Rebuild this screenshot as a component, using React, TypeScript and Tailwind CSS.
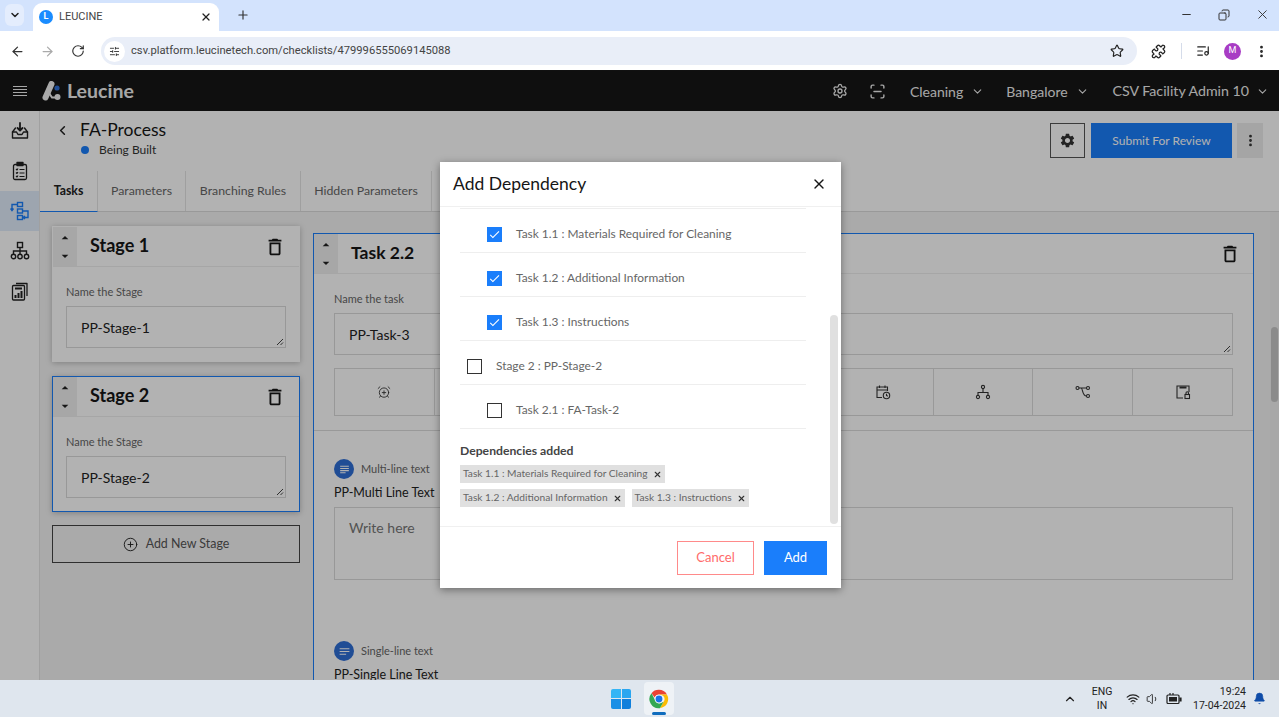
import React from 'react';
import {
  AlarmClockPlus, ArrowLeft, ArrowRight, ChevronDown, ChevronLeft, ChevronUp,
  Copy, EllipsisVertical, Minus, Plus, PlusCircle, Puzzle, RotateCw, ScanLine,
  Settings, SlidersHorizontal, Star, Volume1, Wifi, X, ListMusic, Bell,
} from 'lucide-react';
import { MdDeleteOutline, MdSettings, MdArrowDropUp, MdArrowDropDown, MdCheck, MdSubject, MdNotes } from 'react-icons/md';

const Mover = () => (
  <div className="w-[24px] bg-[#f0f0f0] flex flex-col items-center justify-center h-full text-[#222]">
    <MdArrowDropUp size={16} />
    <MdArrowDropDown size={16} className="mt-[2px]" />
  </div>
);

const Grip = () => (
  <svg width="8" height="8" viewBox="0 0 8 8" className="block">
    <path d="M1 7 L7 1 M4.5 7 L7 4.5" stroke="currentColor" strokeWidth="1" />
  </svg>
);

const StageCard = ({ title, value, active }: { title: string; value: string; active?: boolean }) => (
  <div className={`w-[248px] bg-white shadow-[0_1px_6px_rgba(0,0,0,0.25)] border ${active ? 'border-[#1a7efb]' : 'border-transparent'}`}>
    <div className="h-[40px] flex items-center border-b border-[#eeeeee]">
      <Mover />
      <div className="ml-[13px] -mt-[2px] text-[18px] font-bold text-[#161616]">{title}</div>
      <MdDeleteOutline size={22} className="ml-auto mr-[13px] text-[#161616]" />
    </div>
    <div className="px-[13px] pt-[18px] pb-[13px]">
      <div className="text-[11px] text-[#666] leading-[14px]">Name the Stage</div>
      <div className="relative mt-[7px] h-[42px] border border-[#dadada] pl-[14px] flex items-center text-[14px] text-[#222]">
        {value}
        <span className="absolute right-[1px] bottom-[1px] text-[#444]"><Grip /></span>
      </div>
    </div>
  </div>
);

const DepRow = ({ label, checked, nested }: { label: string; checked?: boolean; nested?: boolean }) => (
  <div className={`h-[44px] border-b border-[#eeeeee] flex items-center pt-[7px] ${nested ? 'pl-[27px]' : 'pl-[7px]'}`}>
    {checked ? (
      <span className="w-[15px] h-[15px] bg-[#1a7efb] flex items-center justify-center text-white"><MdCheck size={13} /></span>
    ) : (
      <span className="w-[15px] h-[15px] border-[1.5px] border-[#333]" />
    )}
    <span className="ml-[14px] text-[11.9px] text-[#666]">{label}</span>
  </div>
);

const Chip = ({ label }: { label: string }) => (
  <span className="h-[18px] bg-[#e0e0e0] px-[3px] flex items-center text-[10.2px] text-[#666]">
    {label}
    <X size={9} strokeWidth={3} className="ml-[5px] text-[#333]" />
  </span>
);

const LeucineLogo = () => (
  <svg width="19" height="20" viewBox="0 0 19 20" className="block">
    <path d="M9.5 3 L3.5 16.5" stroke="#f2f2f2" strokeWidth="6" strokeLinecap="round" />
    <path d="M7 12 L10 16.5 L14 16.5" stroke="#f2f2f2" strokeWidth="2" fill="none" strokeLinecap="round" />
    <circle cx="15" cy="7" r="2.6" fill="#2f6fd6" />
    <circle cx="15.5" cy="16" r="3" fill="#f2f2f2" />
  </svg>
);

const ChromeLogo = () => (
  <svg width="22" height="22" viewBox="0 0 48 48">
    <path d="M24 4a20 20 0 0 1 17.3 10H24a10 10 0 0 0-9.4 6.6L7.6 11.6A20 20 0 0 1 24 4z" fill="#ea4335" />
    <path d="M41.3 14A20 20 0 0 1 26 44l8.7-15A10 10 0 0 0 33 17l-9-3z" fill="#fbbc04" />
    <path d="M26 44A20 20 0 0 1 7.6 11.6L16 27a10 10 0 0 0 11 6.5L34 30z" fill="#34a853" />
    <circle cx="24" cy="24" r="9.5" fill="#fff" />
    <circle cx="24" cy="24" r="7.5" fill="#1a73e8" />
  </svg>
);

const WindowsLogo = () => (
  <div className="grid grid-cols-2 gap-[1px] w-[20px] h-[20px]">
    <span className="bg-[#35b5f5] rounded-tl-[2px]" />
    <span className="bg-[#2aa6f0] rounded-tr-[2px]" />
    <span className="bg-[#1a8fe6] rounded-bl-[2px]" />
    <span className="bg-[#0f7fdc] rounded-br-[2px]" />
  </div>
);

const ToolCell = ({ children, last }: { children?: React.ReactNode; last?: boolean }) => (
  <div className={`flex-1 flex items-center justify-center text-[#333] ${last ? '' : 'border-r border-[#dcdcdc]'}`}>{children}</div>
);

// drawn by hand, the packages have nothing close to these
const NavInbox = () => (
  <svg width="20" height="20" viewBox="0 0 20 20" fill="none" stroke="currentColor" strokeWidth="1.4" strokeLinejoin="round" strokeLinecap="round">
    <path d="M5.5 7 L2.5 11 V17 H17.5 V11 L14.5 7" />
    <path d="M2.5 11 H6.5 L8 13.5 H12 L13.5 11 H17.5" />
    <path d="M10 2 V9 M7.5 7 L10 9.5 L12.5 7" strokeWidth="1.8" />
  </svg>
);
const NavChecklist = () => (
  <svg width="20" height="20" viewBox="0 0 20 20" fill="none" stroke="currentColor" strokeWidth="1.3" strokeLinejoin="round">
    <rect x="3.5" y="3.5" width="13" height="15" rx="1.5" />
    <rect x="7" y="1.5" width="6" height="3" fill="currentColor" />
    <path d="M6 8 L7 9 L8 7.5 M6 11.5 L7 12.5 L8 11 M6 15 L7 16 L8 14.5 M9.5 8.5 H14.5 M9.5 12 H14.5 M9.5 15.5 H14.5" strokeWidth="1.1" />
  </svg>
);
const NavFlow = () => (
  <svg width="20" height="20" viewBox="0 0 20 20" fill="none" stroke="currentColor" strokeWidth="1.4">
    <rect x="7.5" y="1.5" width="5" height="4" />
    <rect x="7.5" y="8" width="5" height="4" />
    <rect x="7.5" y="14.5" width="5" height="4" />
    <path d="M7.5 3.5 H2 V9 M0.5 7.5 L2 9.5 L3.5 7.5 M12.5 10 H18 V16.5 H13 M15 15 L13 16.5 L15 18" />
  </svg>
);
const NavTree = () => (
  <svg width="20" height="20" viewBox="0 0 20 20" fill="none" stroke="currentColor" strokeWidth="1.4">
    <rect x="7.5" y="1.5" width="5" height="5" />
    <path d="M10 6.5 V13 M3.5 13 V10 H16.5 V13" />
    <circle cx="3.5" cy="15.5" r="2.2" />
    <circle cx="10" cy="15.5" r="2.2" />
    <circle cx="16.5" cy="15.5" r="2.2" />
  </svg>
);
const NavReports = () => (
  <svg width="20" height="20" viewBox="0 0 20 20" fill="none" stroke="currentColor" strokeWidth="1.3" strokeLinejoin="round">
    <path d="M6 2.5 H17 V15" />
    <rect x="2.5" y="4.5" width="12" height="14.5" rx="1" />
    <path d="M5 7.5 H12" strokeWidth="2" />
    <path d="M5.5 17 V14 M8.5 17 V12 M11.5 17 V10" strokeWidth="2" />
  </svg>
);
const ToolCalendar = () => (
  <svg width="16" height="16" viewBox="0 0 16 16" fill="none" stroke="currentColor" strokeWidth="1.1">
    <path d="M7 13.5 H2 V3 H12.5 V7 M2 6 H12.5 M4.5 1.5 V4 M10 1.5 V4" />
    <circle cx="11.5" cy="11.5" r="3.2" />
    <path d="M11.5 9.8 V11.5 L12.8 12.3" />
  </svg>
);
const ToolTree = () => (
  <svg width="16" height="16" viewBox="0 0 16 16" fill="none" stroke="currentColor" strokeWidth="1.1">
    <circle cx="8" cy="3" r="1.6" />
    <circle cx="3" cy="13" r="1.6" />
    <circle cx="13" cy="13" r="1.6" />
    <path d="M8 4.6 V8.5 M3 11.4 V8.5 H13 V11.4" />
  </svg>
);
const ToolBranch = () => (
  <svg width="16" height="16" viewBox="0 0 16 16" fill="none" stroke="currentColor" strokeWidth="1.1">
    <circle cx="2.5" cy="4" r="1.5" />
    <circle cx="13" cy="4" r="1.5" />
    <circle cx="13" cy="12" r="1.5" />
    <path d="M4 4 H11.5 M6 4 C8 4 7 12 11.5 12" />
  </svg>
);
const ToolFormLock = () => (
  <svg width="16" height="16" viewBox="0 0 16 16" fill="none" stroke="currentColor" strokeWidth="1.1">
    <path d="M8 14 H2 V2 H14 V8" />
    <path d="M4.5 3.5 H11.5" strokeWidth="2" />
    <rect x="10" y="10.5" width="4.5" height="4" />
    <path d="M11 10.5 V9 A1.2 1.2 0 0 1 13.5 9 V10.5" />
  </svg>
);

const BatteryPlug = () => (
  <svg width="16" height="14" viewBox="0 0 16 14" fill="none" stroke="#222" strokeWidth="1.2">
    <rect x="1" y="3" width="12" height="8.5" rx="1" />
    <path d="M13.5 6 H15 V9 H13.5" fill="#222" />
    <rect x="3" y="5" width="8" height="4.5" fill="#222" stroke="none" />
    <path d="M4 1 V3 M7 1 V3" />
  </svg>
);

export default function App() {
  return (
    <div className="w-[1279px] h-[717px] overflow-hidden flex flex-col font-['Lato',sans-serif] bg-white">
      {/* browser tabs */}
      <div className="h-[31px] bg-[#d3e3fd] flex items-end shrink-0 font-['Roboto',sans-serif]">
        <div className="w-[19px] h-[22px] ml-[5px] mb-[5px] bg-[#e4edfd] rounded-[6px] flex items-center justify-center">
          <ChevronDown size={12} strokeWidth={3} className="text-[#222]" />
        </div>
        <div className="ml-[9px] w-[186px] h-[28px] bg-white rounded-t-[9px] flex items-center pl-[6px] pr-[6px]">
          <span className="w-[14px] h-[14px] rounded-full bg-[#1a8cff] flex items-center justify-center text-white text-[9px] font-bold">L</span>
          <span className="ml-[6px] text-[11px] text-[#444]">LEUCINE</span>
          <X size={12} strokeWidth={2.5} className="ml-auto mr-[1px] text-[#222]" />
        </div>
        <Plus size={14} strokeWidth={2} className="ml-[17px] mb-[9px] text-[#333]" />
        <div className="ml-auto flex items-center mb-[9px] text-[#333]">
          <Minus size={13} />
          <Copy size={12} className="ml-[25px] -scale-x-100" />
          <X size={15} strokeWidth={1.5} className="ml-[25px] mr-[9px]" />
        </div>
      </div>

      {/* browser toolbar */}
      <div className="h-[40px] pt-[1px] bg-white flex items-center shrink-0 border-b border-[#111] font-['Roboto',sans-serif]">
        <ArrowLeft size={15} strokeWidth={2} className="ml-[10px] text-[#333]" />
        <ArrowRight size={15} strokeWidth={2} className="ml-[15px] text-[#aaa]" />
        <RotateCw size={14} strokeWidth={2} className="ml-[16px] text-[#333]" />
        <div className="ml-[16px] w-[1036px] h-[28px] rounded-full bg-[#e9eef8] flex items-center pl-[3px] pr-[12px]">
          <span className="w-[21px] h-[21px] rounded-full bg-white flex items-center justify-center">
            <SlidersHorizontal size={11} className="text-[#333]" />
          </span>
          <span className="ml-[6px] text-[11.2px] text-[#444]">csv.platform.leucinetech.com/checklists/479996555069145088</span>
          <Star size={14} strokeWidth={2} className="ml-auto mr-[1px] text-[#222]" />
        </div>
        <Puzzle size={15} strokeWidth={2} className="ml-[14px] text-[#222]" />
        <span className="ml-[15px] w-[1px] h-[16px] bg-[#d5dcea]" />
        <ListMusic size={14} strokeWidth={2} className="ml-[14px] text-[#222]" />
        <span className="ml-[14px] w-[17px] h-[17px] rounded-full bg-[#a83cc4] text-white text-[9px] flex items-center justify-center">M</span>
        <EllipsisVertical size={15} strokeWidth={2.5} className="ml-[13px] text-[#222]" />
      </div>

      {/* application, dimmed by the dialog backdrop */}
      <div className="relative flex-1 min-h-0 flex flex-col overflow-hidden">
        <div className="h-[40px] bg-[#161616] shrink-0 flex items-center text-[#f0f0f0]">
          <div className="ml-[13px] w-[14px] flex flex-col gap-[2px]">
            <span className="h-[1px] bg-[#f0f0f0]" />
            <span className="h-[1px] bg-[#f0f0f0]" />
            <span className="h-[1px] bg-[#f0f0f0]" />
            <span className="h-[1px] bg-[#f0f0f0]" />
          </div>
          <span className="ml-[15px]"><LeucineLogo /></span>
          <span className="ml-[6px] text-[19.5px] font-bold">Leucine</span>
          <Settings size={16} className="ml-auto" />
          <ScanLine size={17} className="ml-[21px]" />
          <span className="ml-[24px] text-[14px]">Cleaning</span>
          <ChevronDown size={13} className="ml-[8px]" />
          <span className="ml-[22px] text-[14px]">Bangalore</span>
          <ChevronDown size={13} className="ml-[8px]" />
          <span className="ml-[24px] text-[14.2px]">CSV Facility Admin 10</span>
          <ChevronDown size={13} className="ml-[7px] mr-[10px]" />
        </div>

        <div className="flex-1 min-h-0 flex">
          {/* side nav */}
          <div className="w-[40px] shrink-0 bg-white border-r border-[#e6e6e6] flex flex-col text-[#222]">
            <div className="h-[40px] flex items-center justify-center"><NavInbox /></div>
            <div className="h-[40px] flex items-center justify-center"><NavChecklist /></div>
            <div className="h-[40px] flex items-center justify-center bg-[#e1edfb] text-[#1a7efb]"><NavFlow /></div>
            <div className="h-[40px] flex items-center justify-center"><NavTree /></div>
            <div className="h-[40px] flex items-center justify-center"><NavReports /></div>
          </div>

          <div className="flex-1 min-w-0 flex flex-col">
            {/* process head */}
            <div className="h-[60px] shrink-0 bg-white flex items-start pr-[16px]">
              <ChevronLeft size={15} strokeWidth={2.5} className="ml-[15px] mt-[12px] text-[#222]" />
              <div className="ml-[10px] mt-[7px]">
                <div className="text-[17.5px] leading-[24px] text-[#161616]">FA-Process</div>
                <div className="flex items-center">
                  <span className="ml-[1px] w-[8px] h-[8px] rounded-full bg-[#1a7efb]" />
                  <span className="ml-[10px] text-[12px] leading-[16px] text-[#333]">Being Built</span>
                </div>
              </div>
              <div className="ml-auto mt-[12px] flex">
                <div className="w-[35px] h-[35px] border border-[#555] flex items-center justify-center text-[#333]"><MdSettings size={17} /></div>
                <div className="ml-[6px] w-[141px] h-[35px] bg-[#1a7efb] text-white text-[12px] flex items-center justify-center">Submit For Review</div>
                <div className="ml-[5px] w-[26px] h-[35px] bg-[#ececec] flex items-center justify-center text-[#333]"><EllipsisVertical size={15} strokeWidth={2.5} /></div>
              </div>
            </div>

            {/* tabs */}
            <div className="h-[41px] shrink-0 bg-white border-b border-[#dcdcdc] flex text-[12.3px] text-[#666]">
              <div className="w-[58px] flex items-center justify-center font-bold text-[#222] border-r border-[#e4e4e4] border-b border-b-[#1a7efb] -mb-[1px]">Tasks</div>
              <div className="w-[88px] flex items-center justify-center border-r border-[#e4e4e4]">Parameters</div>
              <div className="w-[115px] flex items-center justify-center border-r border-[#e4e4e4]">Branching Rules</div>
              <div className="w-[131px] flex items-center justify-center border-r border-[#e4e4e4]">Hidden Parameters</div>
            </div>

            {/* canvas */}
            <div className="flex-1 min-h-0 bg-[#f4f4f4] flex overflow-hidden">
              <div className="ml-[12px] pt-[14px] flex flex-col gap-[14px] w-[248px] shrink-0">
                <StageCard title="Stage 1" value="PP-Stage-1" />
                <StageCard title="Stage 2" value="PP-Stage-2" active />
                <div className="-mt-[1px] h-[38px] border border-[#444] flex items-center justify-center text-[#555] text-[12.4px]">
                  <PlusCircle size={15} strokeWidth={1.5} className="mr-[8px] text-[#222]" />
                  Add New Stage
                </div>
              </div>

              <div className="ml-[13px] mt-[21px] w-[941px] shrink-0 bg-white border border-[#1a7efb] border-b-0">
                <div className="h-[40px] flex items-center border-b border-[#eeeeee]">
                  <Mover />
                  <div className="ml-[13px] text-[17.5px] font-bold text-[#161616]">Task 2.2</div>
                  <MdDeleteOutline size={22} className="ml-auto mr-[12px] text-[#161616]" />
                </div>
                <div className="px-[20px] pt-[18px] border-b border-[#dcdcdc] pb-[14px]">
                  <div className="text-[11px] text-[#666] leading-[14px]">Name the task</div>
                  <div className="relative mt-[7px] h-[42px] border border-[#dadada] pl-[14px] flex items-center text-[14px] text-[#222]">
                    PP-Task-3
                    <span className="absolute right-[1px] bottom-[1px] text-[#444]"><Grip /></span>
                  </div>
                  <div className="mt-[13px] h-[48px] border border-[#dadada] flex">
                    <ToolCell><AlarmClockPlus size={14} strokeWidth={1.5} /></ToolCell>
                    <ToolCell />
                    <ToolCell />
                    <ToolCell />
                    <ToolCell />
                    <ToolCell><ToolCalendar /></ToolCell>
                    <ToolCell><ToolTree /></ToolCell>
                    <ToolCell><ToolBranch /></ToolCell>
                    <ToolCell last><ToolFormLock /></ToolCell>
                  </div>
                </div>

                <div className="px-[20px] pt-[28px]">
                  <div className="flex items-center h-[20px]">
                    <span className="w-[20px] h-[20px] rounded-full bg-[#2f6fd6] text-white flex items-center justify-center"><MdSubject size={13} /></span>
                    <span className="ml-[7px] text-[11px] text-[#666]">Multi-line text</span>
                  </div>
                  <div className="mt-[5px] text-[12.5px] leading-[18px] text-[#222]">PP-Multi Line Text</div>
                  <div className="mt-[5px] h-[73px] border border-[#dadada] pl-[14px] pt-[9px] text-[14px] text-[#777]">Write here</div>
                  <div className="mt-[61px] flex items-center h-[20px]">
                    <span className="w-[20px] h-[20px] rounded-full bg-[#2f6fd6] text-white flex items-center justify-center"><MdNotes size={13} /></span>
                    <span className="ml-[7px] text-[11px] text-[#666]">Single-line text</span>
                  </div>
                  <div className="mt-[5px] text-[12.5px] leading-[18px] text-[#222]">PP-Single Line Text</div>
                </div>
              </div>

              <div className="ml-auto w-[9px] shrink-0 bg-[#f1f1f1] pt-[115px] px-[1px]">
                <div className="h-[75px] bg-[#c8c8c8] rounded-full" />
              </div>
            </div>
          </div>
        </div>

        {/* backdrop + dialog */}
        <div className="absolute inset-0 bg-black/30" />
        <div className="absolute left-[440px] top-[91px] w-[401px] h-[426px] bg-white shadow-[0_2px_8px_rgba(0,0,0,0.4)] flex flex-col">
          <div className="h-[45px] shrink-0 flex items-center pl-[13px] pr-[14px] border-b border-[#f0f0f0]">
            <span className="text-[17.5px] text-[#161616]">Add Dependency</span>
            <X size={16} strokeWidth={2} className="ml-auto text-[#161616]" />
          </div>
          <div className="flex-1 min-h-0 flex border-b border-[#f0f0f0]">
            <div className="flex-1 min-w-0 pl-[20px] pr-[24px]">
              <div className="border-t border-[#eeeeee] mt-[1px]">
                <DepRow label="Task 1.1 : Materials Required for Cleaning" checked nested />
                <DepRow label="Task 1.2 : Additional Information" checked nested />
                <DepRow label="Task 1.3 : Instructions" checked nested />
                <DepRow label="Stage 2 : PP-Stage-2" />
                <DepRow label="Task 2.1 : FA-Task-2" nested />
              </div>
              <div className="mt-[14px] text-[12.2px] font-bold leading-[16px] text-[#444]">Dependencies added</div>
              <div className="mt-[6px] flex flex-col gap-[6px]">
                <div className="flex">
                  <Chip label="Task 1.1 : Materials Required for Cleaning" />
                </div>
                <div className="flex gap-[7px]">
                  <Chip label="Task 1.2 : Additional Information" />
                  <Chip label="Task 1.3 : Instructions" />
                </div>
              </div>
            </div>
            <div className="w-[8px] mr-[3px] shrink-0 pt-[108px] pb-[2px] flex flex-col">
              <div className="flex-1 bg-[#e0e0e0] rounded-full" />
            </div>
          </div>
          <div className="h-[61px] shrink-0 flex items-center justify-end pr-[14px] gap-[10px] text-[13px]">
            <div className="w-[77px] h-[34px] border border-[#ff8a8a] text-[#ff6b6b] flex items-center justify-center">Cancel</div>
            <div className="w-[63px] h-[34px] bg-[#1a7efb] text-white flex items-center justify-center">Add</div>
          </div>
        </div>
      </div>

      {/* windows taskbar */}
      <div className="h-[37px] shrink-0 bg-[#dfe6ee] flex items-center font-['Roboto',sans-serif] text-[#222]">
        <span className="ml-[611px]"><WindowsLogo /></span>
        <div className="ml-[13px] w-[30px] h-[33px] bg-[#eef2f6] rounded-[4px] flex flex-col items-center justify-center relative">
          <ChromeLogo />
          <span className="absolute bottom-0 w-[14px] h-[3px] rounded-full bg-[#0f6cbd]" />
        </div>
        <ChevronUp size={14} strokeWidth={2} className="ml-[389px]" />
        <div className="ml-[13px] w-[24px] text-[10.5px] leading-[14px] text-center">ENG<br />IN</div>
        <Wifi size={14} strokeWidth={2} className="ml-[12px]" />
        <Volume1 size={14} strokeWidth={1.5} className="ml-[6px]" />
        <span className="ml-[6px]"><BatteryPlug /></span>
        <div className="ml-auto text-[10.5px] leading-[14px] text-right">19:24<br />17-04-2024</div>
        <Bell size={13} fill="#0f4ca8" strokeWidth={1} className="ml-[7px] mr-[13px] text-[#0f4ca8]" />
      </div>
    </div>
  );
}
